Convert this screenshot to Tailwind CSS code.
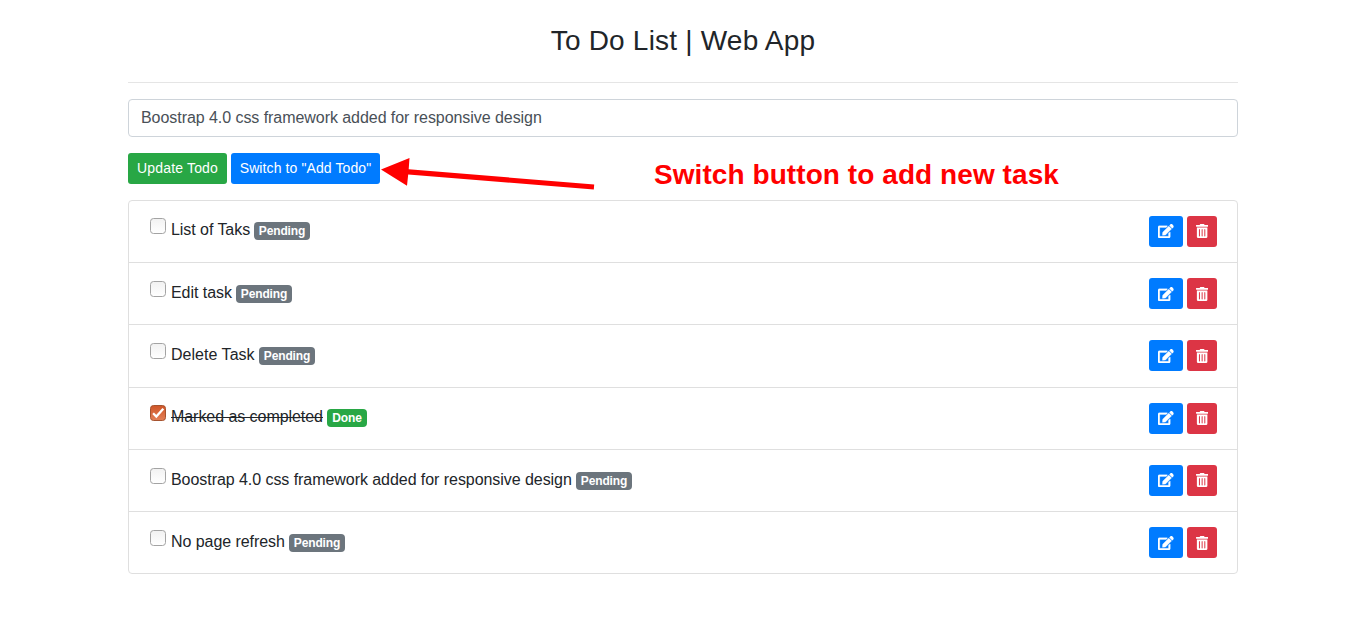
<!DOCTYPE html>
<html lang="en">
<head>
<meta charset="utf-8">
<title>To Do List | Web App</title>
<script src="https://cdn.jsdelivr.net/npm/@tailwindcss/browser@4"></script>
</head>
<body class="bg-white text-[#212529] text-base font-['Liberation_Sans',Arial,sans-serif]">
<svg class="absolute size-0">
  <defs>
    <linearGradient id="plain" x1="0" y1="0" x2="0" y2="1"><stop stop-color="#f1f1f1"/><stop offset="1" stop-color="#fff"/></linearGradient>
    <linearGradient id="orange" x1="0" y1="0" x2="0" y2="1"><stop stop-color="#cf5527"/><stop offset="1" stop-color="#e38058"/></linearGradient>
  </defs>
  <symbol id="edit" viewBox="0 0 576 512"><path fill="currentColor" stroke="currentColor" stroke-width="10" d="M402.600 83.200l90.200 90.200c3.800 3.800 3.800 10 0 13.800L274.400 405.600l-92.800 10.300c-12.400 1.400-22.900-9.100-21.500-21.500l10.300-92.800L388.800 83.200c3.800-3.800 10-3.800 13.800 0zm162-22.900l-48.800-48.800c-15.200-15.200-39.900-15.200-55.200 0l-35.400 35.400c-3.800 3.800-3.800 10 0 13.800l90.200 90.200c3.800 3.800 10 3.800 13.800 0l35.400-35.400c15.200-15.300 15.200-40 0-55.200zM384 346.200V448H64V128h229.800c3.200 0 6.200-1.300 8.500-3.500l40-40c7.600-7.600 2.200-20.500-8.500-20.500H48C21.500 64 0 85.500 0 112v352c0 26.500 21.500 48 48 48h352c26.500 0 48-21.500 48-48V306.200c0-10.700-12.900-16-20.500-8.500l-40 40c-2.200 2.300-3.500 5.300-3.500 8.500z"/></symbol>
  <symbol id="trash" viewBox="0 0 448 512"><path fill="currentColor" d="M32 464a48 48 0 0 0 48 48h288a48 48 0 0 0 48-48V128H32zm272-264a18 18 0 0 1 36 0v240a18 18 0 0 1-36 0zm-98 0a18 18 0 0 1 36 0v240a18 18 0 0 1-36 0zm-98 0a18 18 0 0 1 36 0v240a18 18 0 0 1-36 0zM432 32H312l-9.400-18.700A24 24 0 0 0 281.100 0H166.800a23.720 23.720 0 0 0-21.400 13.300L136 32H16A16 16 0 0 0 0 48v32a16 16 0 0 0 16 16h416a16 16 0 0 0 16-16V48a16 16 0 0 0-16-16z"/></symbol>
  <symbol id="box" viewBox="0 0 16 16"><rect x=".5" y=".5" width="15" height="15" rx="3" fill="url(#plain)" stroke="#a3a3a3"/></symbol>
  <symbol id="checked" viewBox="0 0 16 16"><rect x=".5" y=".5" width="15" height="15" rx="3" fill="url(#orange)" stroke="#a5532f"/><path d="M3.100 8.300l3.200 3.200L13.300 3.800" fill="none" stroke="#fff" stroke-width="2.300"/></symbol>
</svg>
<main class="relative w-[1110px] mx-auto pt-6">
  <h1 class="text-[28px] leading-[34px] text-center tracking-[0.21px]">To Do List | Web App</h1>
  <hr class="mt-6 mb-4 border-black/10">
  <input type="text" value="Boostrap 4.0 css framework added for responsive design" class="block w-full h-[38px] px-3 py-1.5 rounded border border-[#ced4da] text-[#495057] bg-white tracking-[-0.055px]">
  <div class="flex gap-1 mt-4 text-sm leading-[21px] text-white">
    <button class="h-[31px] w-[99px] pb-px rounded-[3px] bg-[#28a745] whitespace-nowrap tracking-[0.17px]">Update Todo</button>
    <button class="h-[31px] w-[149px] pb-px rounded-[3px] bg-[#007bff] whitespace-nowrap tracking-[0.1px]">Switch to "Add Todo"</button>
  </div>
  <ul id="todos" class="mt-4 rounded border border-[#dfdfdf] divide-y divide-[#dfdfdf]"></ul>
  <svg class="absolute left-[252px] top-[156px]" width="216" height="34" viewBox="380 156 216 34"><path fill="#f00" d="M381 169.500L409.500 158l-.8 11.300L594.200 184.500l-.4 5L408.200 174.500 407 185.700z"/></svg>
  <p class="absolute left-[526px] top-[158px] text-[28px] leading-[34px] font-bold text-[#f00] whitespace-nowrap tracking-[0.07px]">Switch button to add new task</p>
</main>
<template id="row">
  <li class="flex justify-between h-[62px] nth-3:h-[63px] last:h-[61px] pl-[21px] pr-5 pt-[15px]">
    <div class="flex items-start" data-group>
      <svg class="size-4 mt-0.5 shrink-0"><use href="#box"/></svg>
      <span class="ml-[5px] mt-0.5 leading-6" data-label></span>
      <span class="ml-1 mt-[6px] h-[18px] w-14 text-center rounded text-xs leading-[18px] font-bold text-white tracking-[-0.12px]" data-badge></span>
    </div>
    <div class="flex gap-1 text-white">
      <button class="flex justify-center pt-2 w-[34px] h-[31px] rounded-[3px] bg-[#007bff]" aria-label="Edit"><svg class="w-[15.750px] h-3.5 overflow-visible"><use href="#edit"/></svg></button>
      <button class="flex justify-center pt-2 w-[30px] h-[31px] rounded-[3px] bg-[#dc3545]" aria-label="Delete"><svg class="w-[12.250px] h-3.5"><use href="#trash"/></svg></button>
    </div>
  </li>
</template>
<script>
const todos = [['List of Taks', 79], ['Edit task', 61], ['Delete Task', 84], ['Marked as completed', 152, true], ['Boostrap 4.0 css framework added for responsive design', 401], ['No page refresh', 114]];
todos.forEach(([text, width, done], i) => {
  const row = document.getElementById('row').content.cloneNode(true);
  const label = row.querySelector('[data-label]');
  const badge = row.querySelector('[data-badge]');
  label.textContent = text;
  label.style.width = width + 'px';
  label.classList.add('whitespace-nowrap', i === 2 ? 'tracking-[0.03px]' : 'tracking-[-0.055px]');
  badge.textContent = done ? 'Done' : 'Pending';
  badge.classList.add(done ? 'bg-[#28a745]' : 'bg-[#6c757d]');
  if (i % 3) row.querySelector('[data-group]').classList.add('pt-px');
  if (i === 1 || i === 2 || i === 5) row.querySelectorAll('button').forEach(b => b.classList.replace('pt-2', 'pt-[9px]'));
  if (done) {
    badge.classList.replace('w-14', 'w-10');
    label.classList.add('line-through');
    row.querySelector('use').setAttribute('href', '#checked');
  }
  document.getElementById('todos').append(row);
});
</script>
</body>
</html>
